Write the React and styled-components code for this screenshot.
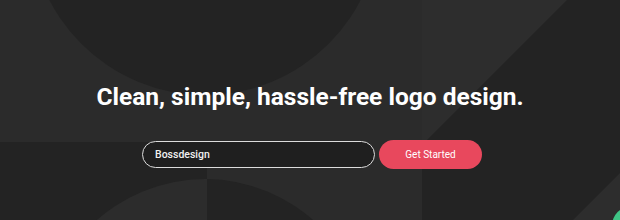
import React from "react";
import styled, { createGlobalStyle } from "styled-components";

const GlobalStyle = createGlobalStyle`
  html, body {
    margin: 0;
    padding: 0;
    background: #2b2b2b;
  }
  body {
    font-family: Roboto, "Liberation Sans", Arial, sans-serif;
  }
`;

const Hero = styled.section`
  position: relative;
  width: 620px;
  height: 220px;
  overflow: hidden;
  background: #2b2b2b;
`;

const Pattern = styled.svg`
  position: absolute;
  inset: 0;
  width: 620px;
  height: 220px;
  z-index: 0;
`;

const Content = styled.div`
  position: relative;
  z-index: 1;
  display: flex;
  flex-direction: column;
  align-items: center;
  padding-top: 82px;
`;

const Title = styled.h1`
  margin: 0;
  font-size: 24.5px;
  line-height: 30px;
  font-weight: 700;
  color: #ffffff;
  letter-spacing: 0;
`;

const Form = styled.form`
  display: flex;
  align-items: center;
  gap: 4px;
  margin-top: 28px;
  padding-left: 4px;
`;

const Input = styled.input`
  box-sizing: border-box;
  width: 233px;
  height: 27px;
  padding: 0 12px;
  border: 1.6px solid #dcdcdc;
  border-radius: 14px;
  background: #1f1f1f;
  color: #f2f2f2;
  font-family: Roboto, "Liberation Sans", Arial, sans-serif;
  font-size: 10.5px;
  font-weight: 500;
  outline: none;
`;

const Button = styled.button`
  box-sizing: border-box;
  width: 103px;
  height: 29px;
  border: none;
  border-radius: 15px;
  background: #e8485d;
  color: #ffffff;
  font-family: Roboto, "Liberation Sans", Arial, sans-serif;
  font-size: 10px;
  font-weight: 400;
  cursor: pointer;
`;

const ChatBubble = styled.div`
  position: absolute;
  left: 612px;
  top: 206px;
  width: 40px;
  height: 40px;
  border-radius: 50%;
  background: #3fc485;
  z-index: 2;
`;

function Background() {
  return (
    <Pattern viewBox="0 0 620 220" aria-hidden="true">
      <defs>
        <clipPath id="leftHalf">
          <rect x="0" y="142" width="207" height="78" />
        </clipPath>
        <clipPath id="midHalf">
          <rect x="207" y="142" width="215" height="78" />
        </clipPath>
      </defs>
      <rect width="620" height="220" fill="#2b2b2b" />
      <rect x="422" y="0" width="198" height="220" fill="#2d2d2d" />
      <circle cx="205" cy="-80" r="175" fill="#232323" />
      <polygon
        points="567,0 620,0 620,173 573,220 422,220 422,145"
        fill="#232323"
      />
      <rect x="0" y="142" width="207" height="78" fill="#232323" />
      <circle cx="205" cy="342" r="163" fill="#2c2c2c" clipPath="url(#leftHalf)" />
      <circle cx="205" cy="342" r="163" fill="#232323" clipPath="url(#midHalf)" />
    </Pattern>
  );
}

export default function App() {
  return (
    <>
      <GlobalStyle />
      <Hero>
        <Background />
        <Content>
          <Title>Clean, simple, hassle-free logo design.</Title>
          <Form onSubmit={(e) => e.preventDefault()}>
            <Input type="text" defaultValue="Bossdesign" />
            <Button type="submit">Get Started</Button>
          </Form>
        </Content>
        <ChatBubble />
      </Hero>
    </>
  );
}
